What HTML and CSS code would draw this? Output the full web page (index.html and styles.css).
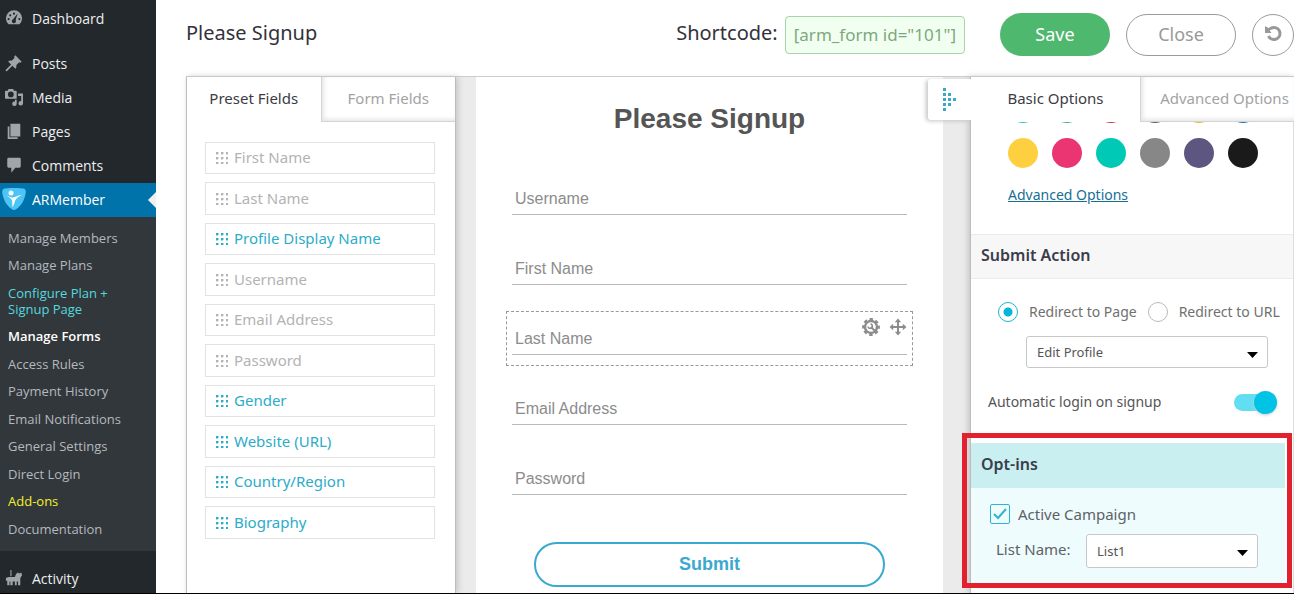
FILE: index.html
```html
<!DOCTYPE html>
<html lang="en">
<head>
<meta charset="utf-8">
<title>Please Signup - Manage Forms</title>
<link rel="stylesheet" href="styles.css">
</head>
<body>
<nav class="sidebar" aria-label="Admin menu">
  <a class="menu-item menu-first" href="#"><svg class="menu-icon" viewBox="0 0 20 20"><path fill-rule="evenodd" d="M4 17a9 9 0 1 1 12 0zM10 4a1.2 1.2 0 1 0 0 2.400a1.200 1.200 0 1 0 0-2.400M5.800 5.800a1.200 1.200 0 1 0 0 2.400a1.200 1.200 0 1 0 0-2.400M4 10a1.200 1.200 0 1 0 0 2.400a1.200 1.200 0 1 0 0-2.400M16 10a1.200 1.200 0 1 0 0 2.400a1.200 1.200 0 1 0 0-2.400M14 5L9 11.500a2.200 2.200 0 1 0 2.800 1z"/></svg>Dashboard</a>
  <a class="menu-item" href="#"><svg class="menu-icon" viewBox="0 0 20 20"><path d="M11.500 1.500l7 7-1.300 1.300-1.500-.5-3.200 3.200c.4 1.600.1 3-.9 4l-3.400-3.400L2 19.300.8 18.900l-.1-1L6.800 11.700 3.500 8.400c1-1 2.500-1.300 4-.9l3.200-3.200-.5-1.500z"/></svg>Posts</a>
  <a class="menu-item" href="#"><svg class="menu-icon" viewBox="0 0 20 20"><path fill-rule="evenodd" d="M1 3h2l1-2h5l1 2h2a1 1 0 0 1 1 1v7a1 1 0 0 1-1 1H1a1 1 0 0 1-1-1V4a1 1 0 0 1 1-1zM6.500 4a3.200 3.200 0 1 0 0 6.400a3.200 3.200 0 1 0 0-6.400"/><path d="M14.500 6H20v11a2.500 2.500 0 1 1-2-2.400V9h-3.500z"/><path d="M11 13h2v4.500A2.500 2.500 0 1 1 11 15z"/></svg>Media</a>
  <a class="menu-item" href="#"><svg class="menu-icon" viewBox="0 0 20 20"><path d="M6 2h11v14H6zM3 5h2v12h9v2H3z"/></svg>Pages</a>
  <a class="menu-item" href="#"><svg class="menu-icon" viewBox="0 0 20 20"><path d="M4 2h12a1.500 1.500 0 0 1 1.500 1.500v8A1.500 1.500 0 0 1 16 13h-4.500L7 18.500V13H4a1.500 1.500 0 0 1-1.500-1.500v-8A1.500 1.500 0 0 1 4 2z"/></svg>Comments</a>
  <a class="menu-item menu-current" href="#"><svg class="brand-icon" viewBox="0 0 24 22"><path fill="#4cc5f6" d="M3 0.500Q12-.7 21 .5Q24 1 23.800 4C23 12 19 18 14 21.300Q12 22.600 10 21.300C5 18 1 12 .2 4Q0 1 3 .5z"/><circle cx="9" cy="5" r="2.500" fill="#fff"/><path fill="#fff" d="M4.500 7c3 2.500 6 3 9 1.800 2.500-1 4.500-2 7-2-3 1.200-6.500 3.200-7.500 6.200-.6 2-.9 4-2.500 6-.6-3 .3-5.500-1-7.500C8.300 9.800 6 9 4.500 7z"/></svg>ARMember</a>
  <ul class="submenu">
    <li><a href="#">Manage Members</a></li>
    <li><a href="#">Manage Plans</a></li>
    <li><a class="sub-cyan" href="#">Configure Plan +<br>Signup Page</a></li>
    <li><a class="sub-current" href="#">Manage Forms</a></li>
    <li><a href="#">Access Rules</a></li>
    <li><a href="#">Payment History</a></li>
    <li><a href="#">Email Notifications</a></li>
    <li><a href="#">General Settings</a></li>
    <li><a href="#">Direct Login</a></li>
    <li><a class="sub-yellow" href="#">Add-ons</a></li>
    <li><a href="#">Documentation</a></li>
  </ul>
  <a class="menu-item menu-last" href="#"><svg class="menu-icon" viewBox="0 0 20 20"><path d="M1 10l3-1h7l1-3 2-2 2 1 2-1 1 3-2 3v8h-2.500v-4H13v4h-2v-4H8.500v4H6v-4H5v4H2.500v-5L1 13zM6 1h1.200v7H6z"/></svg>Activity</a>
</nav>

<main class="main">
  <header class="topbar">
    <h1 class="page-title">Please Signup</h1>
    <div class="shortcode"><span class="shortcode-label">Shortcode:</span><code class="code">[arm_form id="101"]</code></div>
    <div class="actions">
      <button class="btn btn-save" type="button">Save</button>
      <button class="btn btn-close" type="button">Close</button>
      <button class="btn btn-reset" type="button" aria-label="Reset"><svg viewBox="0 0 18 18" width="18" height="18"><path fill="none" stroke="currentColor" stroke-width="3" d="M4 5.500C6 3 8 2.500 10 2.500a6 6 0 1 1-5.500 8.500"/><path fill="currentColor" d="M1 1l2.500 1.500 4 5.500H1z"/></svg></button>
    </div>
  </header>

  <div class="workspace">
    <section class="fields-panel">
      <div class="tabs">
        <button class="tab tab-active" type="button">Preset Fields</button>
        <button class="tab tab-idle" type="button">Form Fields</button>
      </div>
      <ul class="field-list">
        <li class="field">First Name</li>
        <li class="field">Last Name</li>
        <li class="field field-on">Profile Display Name</li>
        <li class="field">Username</li>
        <li class="field">Email Address</li>
        <li class="field">Password</li>
        <li class="field field-on">Gender</li>
        <li class="field field-on">Website (URL)</li>
        <li class="field field-on">Country/Region</li>
        <li class="field field-on">Biography</li>
      </ul>
    </section>

    <section class="canvas">
      <form class="form">
        <h2 class="form-title">Please Signup</h2>
        <div class="form-rows">
          <div class="row"><input class="line-input" type="text" placeholder="Username" aria-label="Username"></div>
          <div class="row"><input class="line-input" type="text" placeholder="First Name" aria-label="First Name"></div>
          <div class="row row-selected">
            <input class="line-input" type="text" placeholder="Last Name" aria-label="Last Name">
            <div class="row-tools">
              <button class="tool" type="button" aria-label="Field settings"><svg viewBox="0 0 18 18" width="18" height="18"><circle cx="9" cy="9" r="6" fill="none" stroke="currentColor" stroke-width="2.400"/><circle cx="9" cy="9" r="7.700" fill="none" stroke="currentColor" stroke-width="2.400" stroke-dasharray="3.400 2.647" stroke-dashoffset="1.700"/><path fill="none" stroke="currentColor" stroke-width="2" d="M9 9l4.500 4.500"/><path fill="none" stroke="currentColor" stroke-width="1.600" d="M8.500 6a2.200 2.200 0 1 1-2.500 2.500"/></svg></button>
              <button class="tool" type="button" aria-label="Move field"><svg viewBox="0 0 18 18" width="18" height="18"><path fill="none" stroke="currentColor" stroke-width="2" d="M9 3v12M3 9h12"/><path fill="currentColor" d="M9 .5l3.200 3.700H5.800zM9 17.500l3.200-3.700H5.800zM.5 9l3.700-3.200v6.400zM17.500 9l-3.700-3.200v6.400z"/></svg></button>
            </div>
          </div>
          <div class="row"><input class="line-input" type="text" placeholder="Email Address" aria-label="Email Address"></div>
          <div class="row"><input class="line-input" type="password" placeholder="Password" aria-label="Password"></div>
        </div>
        <button class="submit" type="button">Submit</button>
      </form>
    </section>

    <aside class="options-panel">
      <button class="collapse" type="button" aria-label="Collapse options"><svg viewBox="0 0 13 23" width="13" height="23" fill="#3aa9c4"><path d="M0 0h3v3H0zM0 5h3v3H0zM0 10h3v3H0zM0 15h3v3H0zM0 20h3v3H0zM5 5h3v3H5zM5 10h3v3H5zM5 15h3v3H5zM10 10h3v3h-3z"/></svg></button>
      <div class="tabs">
        <button class="tab tab-active" type="button">Basic Options</button>
        <button class="tab tab-idle" type="button">Advanced Options</button>
      </div>
      <div class="options-body">
        <div class="swatches">
          <button class="swatch sw-aqua" type="button" aria-label="Aqua"></button>
          <button class="swatch sw-green" type="button" aria-label="Green"></button>
          <button class="swatch sw-red" type="button" aria-label="Red"></button>
          <button class="swatch sw-slate" type="button" aria-label="Slate"></button>
          <button class="swatch sw-gold" type="button" aria-label="Gold"></button>
          <button class="swatch sw-blue" type="button" aria-label="Blue"></button>
          <button class="swatch sw-yellow" type="button" aria-label="Yellow"></button>
          <button class="swatch sw-pink" type="button" aria-label="Pink"></button>
          <button class="swatch sw-teal" type="button" aria-label="Teal"></button>
          <button class="swatch sw-gray" type="button" aria-label="Gray"></button>
          <button class="swatch sw-purple" type="button" aria-label="Purple"></button>
          <button class="swatch sw-black" type="button" aria-label="Black"></button>
        </div>
        <a class="advanced-link" href="#">Advanced Options</a>
        <h3 class="group-title">Submit Action</h3>
        <div class="group">
          <div class="radios">
            <label class="choice"><input class="radio" type="radio" name="redirect" checked>Redirect to Page</label>
            <label class="choice"><input class="radio" type="radio" name="redirect">Redirect to URL</label>
          </div>
          <select class="select select-page" aria-label="Redirect page"><option>Edit Profile</option></select>
          <label class="toggle-row">Automatic login on signup<input class="toggle" type="checkbox" checked></label>
        </div>
        <section class="optins">
          <h3 class="group-title optins-title">Opt-ins</h3>
          <div class="optins-body">
            <label class="check-label"><input class="check" type="checkbox" checked>Active Campaign</label>
            <div class="list-row"><label class="list-label" for="list-name">List Name:</label><select class="select select-list" id="list-name"><option>List1</option></select></div>
          </div>
        </section>
      </div>
    </aside>
  </div>
</main>
</body>
</html>
```

FILE: styles.css
```css
* { box-sizing: border-box; }

body {
  margin: 0;
  height: 100vh;
  display: flex;
  overflow: hidden;
  background: #fff;
  border-bottom: 1px solid #000;
  font-family: "Noto Sans", "Open Sans", sans-serif;
  font-size: 15px;
  color: #32323a;
}

h1, h2, h3, ul { margin: 0; padding: 0; }
ul { list-style: none; }
button { font: inherit; padding: 0; border: 0; background: none; cursor: pointer; }

/* Sidebar */
.sidebar {
  flex: 0 0 156px;
  background: #23282d;
  font-family: "Open Sans", sans-serif;
  font-size: 14px;
}
.menu-item {
  position: relative;
  display: flex;
  align-items: center;
  gap: 9px;
  height: 34px;
  padding: 0 0 2px 5px;
  color: #eee;
  text-decoration: none;
}
.menu-first { margin: 2px 0 11px; }
.menu-last { margin-top: 11px; }
.menu-icon { width: 18px; height: 18px; fill: #a0a5aa; }
.menu-current { background: #0073aa; color: #fff; gap: 6px; padding-left: 2px; }
.menu-current::after {
  content: "";
  position: absolute;
  top: 9px;
  right: 0;
  border: 8px solid transparent;
  border-left: 0;
  border-right-color: #f1f1f1;
}
.brand-icon { width: 24px; height: 22px; }
.submenu { padding: 7px 0 9px; background: #32373c; font-size: 13px; line-height: 16px; }
.submenu li { padding: 6px 8px 5px; }
.submenu li:nth-child(even) { padding-bottom: 6px; }
.submenu a { color: #b4b9be; text-decoration: none; }
.submenu .sub-cyan { color: #53d9de; }
.submenu .sub-current { color: #fff; font-weight: 600; }
.submenu .sub-yellow { color: #f5f02a; }

/* Top bar */
.main { flex: 1; min-width: 0; display: flex; flex-direction: column; padding-left: 30px; }
.topbar { flex: 0 0 76px; display: flex; align-items: center; padding-bottom: 7px; }
.page-title { padding-bottom: 4px; font-size: 20px; font-weight: 400; }
.shortcode { margin-left: auto; display: flex; align-items: center; gap: 7px; font-size: 20px; }
.shortcode-label { padding-bottom: 4px; }
.code {
  padding: 0 8px;
  border: 1px solid #a9d3a9;
  border-radius: 4px;
  background: #f1fff1;
  color: #7fa77f;
  font-family: inherit;
  font-size: 17px;
  line-height: 36px;
}
.actions { display: flex; align-items: center; gap: 16px; margin-left: 35px; }
.btn { width: 110px; height: 42px; padding-bottom: 2px; border-radius: 22px; font-size: 18px; }
.btn-save { height: 43px; background: #4fb86f; color: #fff; }
.btn-close { border: 1px solid #9b9b9b; color: #999; }
.btn-reset { width: 42px; display: grid; place-items: center; border: 1px solid #9b9b9b; color: #999; }

/* Workspace */
.workspace { flex: 1; min-height: 0; display: flex; border-top: 1px solid #ccc; }
.tabs { display: flex; height: 45px; }
.tab { padding-bottom: 3px; color: #3c3c44; white-space: nowrap; }
.tab-idle {
  color: #a3a3a3;
  border-left: 1px solid #d4d4d4;
  border-bottom: 1px solid #d4d4d4;
  box-shadow: inset 2px -2px 4px #e6e6e6;
}

/* Field list */
.fields-panel {
  position: relative;
  flex: 0 0 270px;
  border: solid #bdbdbd;
  border-width: 0 1px;
  box-shadow: 2px 0 6px #c4c4c4;
}
.fields-panel .tab { flex: 1; }
.field-list { display: grid; gap: 8px; padding: 20px 20px 0 18px; }
.field {
  display: flex;
  align-items: center;
  gap: 6px;
  height: 32px;
  padding: 0 0 2px 10px;
  border: 1px solid #e2e2e2;
  color: #b3b3b3;
}
.field:nth-child(even) { height: 33px; }
.field::before {
  content: "";
  width: 12px;
  height: 12px;
  margin-top: 2px;
  background: radial-gradient(circle at 1px 1px, currentColor 1px, transparent 2px) 0 0 / 5px 5px;
}
.field-on { color: #2bacc9; }

/* Form canvas */
.canvas { flex: 1; min-width: 0; padding: 0 27px 0 20px; background: #ebebeb; }
.form {
  height: 100%;
  display: flex;
  flex-direction: column;
  padding: 25px 30px 0;
  background: #fff;
  font-family: "Liberation Sans", Arial, sans-serif;
}
.form-title { color: #555; font-size: 28px; line-height: 34px; text-align: center; }
.form-rows { display: grid; gap: 15px; margin: 35px 0 36px; }
.row { position: relative; padding: 10px 5px; border: 1px solid transparent; }
.row-selected { border: 1px dashed #999; }
.line-input {
  display: block;
  width: 100%;
  height: 33px;
  padding: 2px 3px 0;
  border: 0;
  border-bottom: 1px solid #b9b9b9;
  background: none;
  font: inherit;
  font-size: 16px;
}
.line-input::placeholder { color: #8c8c8c; }
.row-tools { position: absolute; top: 6px; right: 5px; display: flex; gap: 9px; }
.tool { display: flex; color: #8c8c8c; }
.submit {
  align-self: center;
  width: 86%;
  height: 45px;
  border: 2px solid #3aa9d0;
  border-radius: 23px;
  color: #3aa9d0;
  font-size: 18px;
  font-weight: 700;
}

/* Options panel */
.options-panel {
  position: relative;
  flex: 0 0 324px;
  min-width: 0;
  display: flex;
  flex-direction: column;
  background: #fff;
  border-left: 1px solid #bdbdbd;
  box-shadow: -2px 0 6px #c4c4c4;
}
.options-panel .tabs { flex: none; position: relative; background: #fff; }
.options-panel .tab-active { flex: 0 0 169px; }
.options-panel .tab-idle { flex: 1; padding-left: 14px; }
.collapse {
  position: absolute;
  top: 2px;
  left: -43px;
  width: 43px;
  height: 41px;
  display: grid;
  place-items: center;
  background: #fff;
  border-radius: 3px 0 0 3px;
  box-shadow: -2px 1px 4px #c4c4c4;
}
.options-body { flex: 1; min-height: 0; overflow-y: clip; border-right: 1px solid #ddd; }
.swatches {
  display: grid;
  grid-template-columns: repeat(6, 30px);
  gap: 15px 14px;
  margin: -29px 0 0 37px;
}
.swatch { height: 30px; border-radius: 50%; }
.sw-aqua { background: #3bbfc0; }
.sw-green { background: #45b576; }
.sw-red { background: #d2394a; }
.sw-slate { background: #5a5f78; }
.sw-gold { background: #efb824; }
.sw-blue { background: #2a6fc0; }
.sw-yellow { background: #fecf3e; }
.sw-pink { background: #eb3573; }
.sw-teal { background: #00c9b5; }
.sw-gray { background: #878787; }
.sw-purple { background: #5d5680; }
.sw-black { background: #1a1a1a; }
.advanced-link {
  display: block;
  margin: 17px 0 29px 37px;
  color: #176f94;
  font-size: 14px;
  line-height: 20px;
}
.group-title {
  height: 45px;
  padding-left: 10px;
  border: solid #ececec;
  border-width: 1px 0;
  background: #f7f7f7;
  color: #3a3d4a;
  font-size: 16px;
  font-weight: 600;
  line-height: 40px;
}
.group { padding: 22px 16px 0 17px; color: #555; }
.radios {
  display: flex;
  gap: 11px;
  padding-left: 10px;
  color: #707070;
  font-size: 14px;
  white-space: nowrap;
}
.choice { display: flex; align-items: center; gap: 11px; line-height: 22px; }
.radio {
  appearance: none;
  flex: none;
  width: 20px;
  height: 20px;
  margin: 0;
  border: 1px solid #bbb;
  border-radius: 50%;
}
.radio:checked { border-color: #1fb5cf; background: radial-gradient(circle, #00b8d9 4px, transparent 5px); }
.select {
  appearance: none;
  height: 32px;
  padding: 0 10px;
  border: 1px solid #c8c8c8;
  border-radius: 3px;
  background: #fff url("data:image/svg+xml,%3Csvg xmlns='http://www.w3.org/2000/svg' width='11' height='6'%3E%3Cpath d='M0 0h11L5.500 6z'/%3E%3C/svg%3E") no-repeat right 9px top 15px;
  color: #555;
  font: inherit;
  font-size: 13px;
}
.select-page { display: block; width: 242px; margin: 13px 0 0 38px; }
.toggle-row {
  display: flex;
  align-items: center;
  justify-content: space-between;
  margin-top: 22px;
  font-size: 14px;
  line-height: 24px;
}
.toggle {
  appearance: none;
  position: relative;
  width: 43px;
  height: 17px;
  margin: 0;
  border-radius: 9px;
  background: #62def2;
}
.toggle::after {
  content: "";
  position: absolute;
  top: -3px;
  right: 0;
  width: 23px;
  height: 23px;
  border-radius: 50%;
  background: #00c3e6;
  box-shadow: 0 1px 3px #ccc;
}

/* Opt-ins */
.optins { position: relative; margin: 29px 8px 0 0; background: #effcfd; color: #5c6266; }
.optins::after {
  content: "";
  position: absolute;
  inset: -10px -7px -5px -9px;
  border: 5px solid #e1212d;
  pointer-events: none;
}
.optins-title { border-color: #c9eff1; background: #c9eff1; }
.optins-body { padding: 15px 27px 15px 19px; }
.check-label { display: flex; align-items: center; gap: 8px; line-height: 22px; }
.check {
  appearance: none;
  width: 20px;
  height: 20px;
  margin: 0;
  border: 1px solid #2cb6d0;
  border-radius: 2px;
  background: url("data:image/svg+xml,%3Csvg xmlns='http://www.w3.org/2000/svg' width='14' height='12'%3E%3Cpath d='M1 6l4 4 8-9' fill='none' stroke='%232cb6d0' stroke-width='2'/%3E%3C/svg%3E") no-repeat center;
}
.list-row { display: flex; align-items: center; justify-content: space-between; margin-top: 9px; padding-left: 6px; }
.list-label { padding-bottom: 4px; }
.select-list { width: 172px; height: 34px; }
```
